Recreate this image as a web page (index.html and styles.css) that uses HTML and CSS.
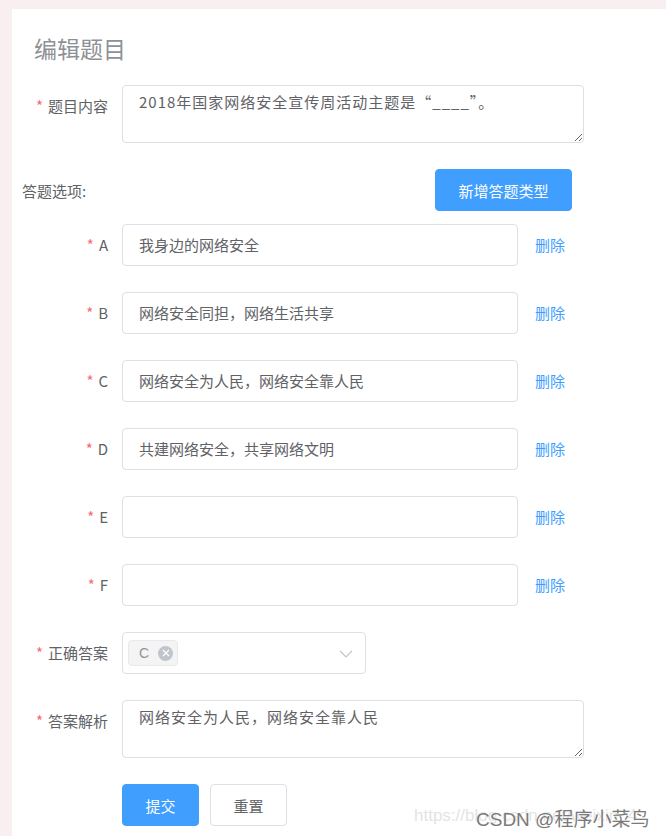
FILE: index.html
```html
<!DOCTYPE html>
<html lang="zh-CN">
<head>
<meta charset="utf-8">
<title>编辑题目</title>
<link rel="stylesheet" href="styles.css">
</head>
<body>
<div class="page">
  <div class="card">
    <h2 class="title">编辑题目</h2>

    <div class="item">
      <label class="label req">题目内容</label>
      <textarea class="ta">2018年国家网络安全宣传周活动主题是“____”。</textarea>
    </div>

    <div class="opts-head">
      <span class="opts-label">答题选项:</span>
      <button class="btn primary add">新增答题类型</button>
    </div>

    <div class="item">
      <label class="label req">A</label>
      <div class="input">我身边的网络安全</div>
      <a class="del">删除</a>
    </div>
    <div class="item">
      <label class="label req">B</label>
      <div class="input">网络安全同担，网络生活共享</div>
      <a class="del">删除</a>
    </div>
    <div class="item">
      <label class="label req">C</label>
      <div class="input">网络安全为人民，网络安全靠人民</div>
      <a class="del">删除</a>
    </div>
    <div class="item">
      <label class="label req">D</label>
      <div class="input">共建网络安全，共享网络文明</div>
      <a class="del">删除</a>
    </div>
    <div class="item">
      <label class="label req">E</label>
      <div class="input"></div>
      <a class="del">删除</a>
    </div>
    <div class="item">
      <label class="label req">F</label>
      <div class="input"></div>
      <a class="del">删除</a>
    </div>

    <div class="item">
      <label class="label req">正确答案</label>
      <div class="select">
        <span class="tag">C<span class="tag-close"><svg width="8" height="8" viewBox="0 0 8 8"><path d="M1 1L7 7M7 1L1 7" stroke="#fff" stroke-width="1.2"/></svg></span></span>
        <svg class="arrow" width="14" height="8" viewBox="0 0 14 8"><path d="M1 1L7 7L13 1" fill="none" stroke="#c0c4cc" stroke-width="1.2"/></svg>
      </div>
    </div>

    <div class="item">
      <label class="label req">答案解析</label>
      <textarea class="ta">网络安全为人民，网络安全靠人民</textarea>
    </div>

    <div class="actions">
      <button class="btn primary small">提交</button>
      <button class="btn plain small">重置</button>
    </div>

    <div class="watermark">
      <span class="wm-url">https://blog.csdn.net/weixin_4</span>
      <span class="wm-main">CSDN @程序小菜鸟</span>
    </div>
  </div>
</div>
</body>
</html>
```

FILE: styles.css
```css
html, body {
  margin: 0;
  padding: 0;
}
body {
  background: #f9eff0;
  font-family: "Noto Sans CJK SC", "Liberation Sans", sans-serif;
  color: #606266;
  font-size: 15px;
}
.page {
  padding: 9px 0 0 12px;
  height: 836px;
  box-sizing: border-box;
  overflow: hidden;
}
.card {
  position: relative;
  background: #fff;
  height: 827px;
  padding-top: 24px;
  box-sizing: border-box;
}
.title {
  margin: 0 0 22px 22px;
  font-size: 23px;
  line-height: 30px;
  font-weight: 400;
  color: #8e9196;
}
.item {
  display: flex;
  align-items: flex-start;
  margin-bottom: 26px;
}
.label {
  width: 110px;
  box-sizing: border-box;
  padding-right: 14px;
  text-align: right;
  line-height: 42px;
  color: #606266;
  flex: none;
}
.req::before {
  content: "*";
  color: #f56c6c;
  margin-right: 5px;
}
.ta {
  width: 462px;
  height: 58px;
  box-sizing: border-box;
  border: 1px solid #dcdfe6;
  border-radius: 4px;
  padding: 5px 16px;
  margin: 0;
  font-family: "Noto Sans CJK SC", sans-serif;
  font-size: 15px;
  line-height: 22px;
  letter-spacing: 1px;
  color: #606266;
  resize: vertical;
  outline: none;
}
.opts-head {
  display: flex;
  justify-content: space-between;
  align-items: center;
  width: 560px;
  box-sizing: border-box;
  padding-left: 10px;
  margin-bottom: 13px;
}
.opts-label {
  color: #606266;
}
.btn {
  height: 42px;
  border-radius: 4px;
  font-family: "Noto Sans CJK SC", sans-serif;
  font-size: 15px;
  padding: 0;
  cursor: pointer;
}
.primary {
  background: #409eff;
  border: 1px solid #409eff;
  color: #fff;
}
.add {
  width: 137px;
}
.plain {
  background: #fff;
  border: 1px solid #dcdfe6;
  color: #606266;
}
.small {
  width: 77px;
}
.input {
  width: 396px;
  height: 42px;
  box-sizing: border-box;
  border: 1px solid #dcdfe6;
  border-radius: 4px;
  padding: 0 16px;
  line-height: 40px;
  color: #606266;
  flex: none;
}
.del {
  margin-left: 17px;
  line-height: 42px;
  color: #409eff;
}
.select {
  position: relative;
  width: 244px;
  height: 42px;
  box-sizing: border-box;
  border: 1px solid #dcdfe6;
  border-radius: 4px;
  display: flex;
  align-items: center;
  padding-left: 5px;
}
.tag {
  display: inline-flex;
  align-items: center;
  height: 26px;
  box-sizing: border-box;
  padding: 0 4px 0 10px;
  background: #f4f4f5;
  border: 1px solid #e9e9eb;
  border-radius: 4px;
  color: #909399;
  font-family: "Liberation Sans", sans-serif;
  font-size: 14px;
}
.tag-close {
  display: inline-flex;
  align-items: center;
  justify-content: center;
  width: 15px;
  height: 15px;
  border-radius: 50%;
  background: #c0c4cc;
  margin-left: 9px;
}
.arrow {
  position: absolute;
  right: 12px;
  top: 17px;
}
.actions {
  display: flex;
  gap: 11px;
  padding-left: 110px;
}
.watermark {
  position: absolute;
  left: 402px;
  top: 795px;
  height: 24px;
  width: 260px;
}
.wm-url {
  position: absolute;
  left: 0;
  top: 2px;
  font-family: "Liberation Sans", sans-serif;
  font-size: 17px;
  color: #e4e4e4;
  white-space: nowrap;
}
.wm-main {
  position: absolute;
  left: 62px;
  top: 0;
  font-family: "Liberation Sans", "Noto Sans CJK SC", sans-serif;
  font-size: 19px;
  color: #7a7a7a;
  white-space: nowrap;
  text-shadow: 0 0 1px #fff;
}
```
